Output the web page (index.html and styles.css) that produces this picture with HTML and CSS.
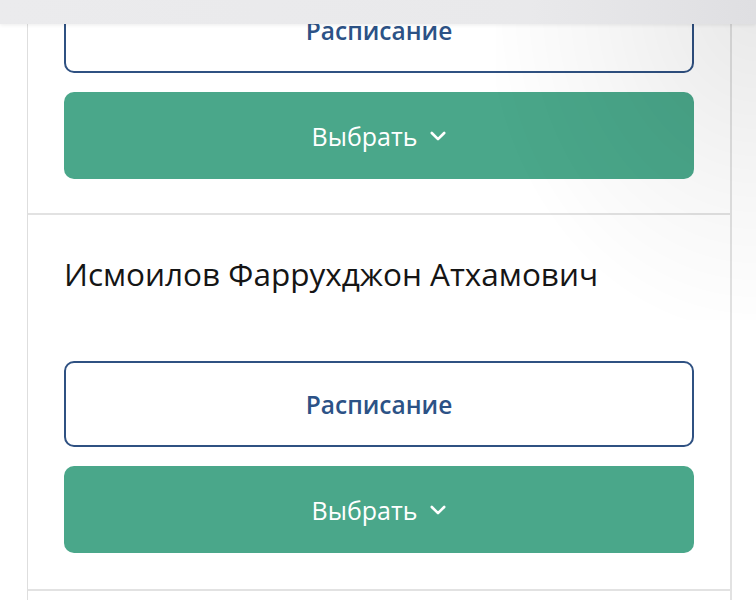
FILE: index.html
```
<!DOCTYPE html>
<html lang="ru">
<head>
  <meta charset="UTF-8">
  <meta name="viewport" content="width=device-width, initial-scale=1.0">
  <title>Врачи</title>
  <link rel="stylesheet" href="styles.css">
</head>
<body>
  <div class="topbar"></div>
  <div class="shade"></div>

  <div class="doctors">
    <div class="doctor doctor-first">
      <div class="actions">
        <button class="btn btn-outline">Расписание</button>
        <button class="btn btn-green">Выбрать
          <svg class="chevron" width="16" height="11" viewBox="0 0 16 11">
            <path d="M1.8 2 L8 8.2 L14.2 2" fill="none" stroke="#fff" stroke-width="2.6" stroke-linecap="round" stroke-linejoin="round"/>
          </svg>
        </button>
      </div>
    </div>

    <div class="doctor">
      <div class="doctor-name">Исмоилов Фаррухджон Атхамович</div>
      <div class="actions">
        <button class="btn btn-outline">Расписание</button>
        <button class="btn btn-green">Выбрать
          <svg class="chevron" width="16" height="11" viewBox="0 0 16 11">
            <path d="M1.8 2 L8 8.2 L14.2 2" fill="none" stroke="#fff" stroke-width="2.6" stroke-linecap="round" stroke-linejoin="round"/>
          </svg>
        </button>
      </div>
    </div>

    <div class="doctor"></div>
  </div>
</body>
</html>
```
FILE: styles.css
```
body {
  margin: 0;
  font-family: 'Open Sans', 'Noto Sans', sans-serif;
  background: #ffffff;
  overflow: hidden;
}

/* серая полоса сверху */
.topbar {
  position: fixed;
  top: 0;
  left: 0;
  right: 0;
  height: 24px;
  background: linear-gradient(to right, #ebebed 0%, #e9e9eb 70%, #dfdfe2 100%);
  box-shadow: 0 1px 4px rgba(0, 0, 0, 0.08);
  z-index: 2;
}

.shade {
  position: fixed;
  top: 0;
  right: 0;
  width: 260px;
  height: 320px;
  background: radial-gradient(ellipse at 100% 0%, rgba(0, 0, 0, 0.09) 0%, rgba(0, 0, 0, 0.03) 45%, rgba(0, 0, 0, 0) 75%);
  pointer-events: none;
  z-index: 1;
}

.doctors {
  margin: -48px 0 0 27px;
  width: 702px;
  border-left: 1px solid #dedede;
  border-right: 2px solid #e2e2e2;
}

.doctor {
  padding: 36px 36px 36px 36px;
  border-bottom: 2px solid #e2e2e2;
}

.doctor-first {
  padding-top: 35px;
  padding-bottom: 34px;
}

.doctor-name {
  font-size: 31.5px;
  line-height: 42px;
  color: #151515;
  margin: 2px 0 66px 0;
}

.actions {
  display: flex;
  flex-direction: column;
  gap: 19px;
}

.btn {
  display: flex;
  align-items: center;
  justify-content: center;
  gap: 13px;
  height: 87px;
  width: 100%;
  border-radius: 10px;
  font-family: 'Open Sans', 'Noto Sans', sans-serif;
  font-size: 24.5px;
  font-weight: 600;
  cursor: pointer;
}

.btn-outline {
  background: #ffffff;
  border: 2px solid #2f5182;
  color: #2c5286;
  height: 86px;
}

.btn-green {
  background: #4aa78a;
  border: none;
  color: #ffffff;
  font-size: 25px;
  font-weight: 500;
}

.chevron {
  margin-top: 2px;
}
```
